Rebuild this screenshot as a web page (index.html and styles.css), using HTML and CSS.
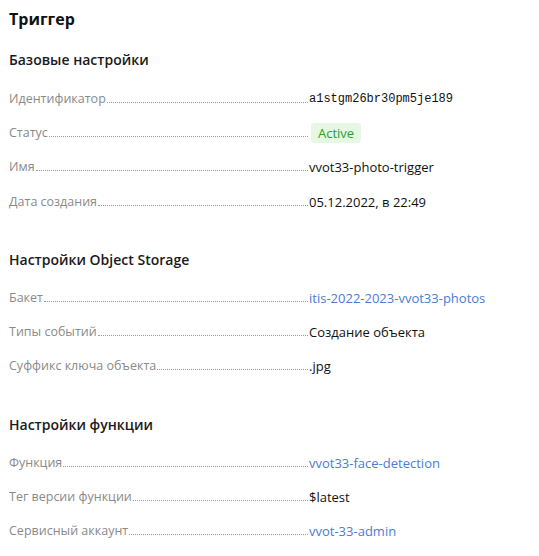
FILE: index.html
```html
<!DOCTYPE html>
<html lang="ru">
<head>
<meta charset="utf-8">
<title>Триггер</title>
<link rel="stylesheet" href="styles.css">
</head>
<body>
<div class="page">
  <h1 class="title">Триггер</h1>

  <section class="section first">
    <h2 class="section-title">Базовые настройки</h2>
    <div class="rows">
      <div class="row"><div class="label"><span class="label-text">Идентификатор</span><span class="dots"></span></div><div class="value mono">a1stgm26br30pm5je189</div></div>
      <div class="row"><div class="label"><span class="label-text">Статус</span><span class="dots"></span></div><div class="value"><span class="badge">Active</span></div></div>
      <div class="row"><div class="label"><span class="label-text">Имя</span><span class="dots"></span></div><div class="value">vvot33-photo-trigger</div></div>
      <div class="row"><div class="label"><span class="label-text">Дата создания</span><span class="dots"></span></div><div class="value">05.12.2022, в 22:49</div></div>
    </div>
  </section>

  <section class="section">
    <h2 class="section-title">Настройки Object Storage</h2>
    <div class="rows">
      <div class="row"><div class="label"><span class="label-text">Бакет</span><span class="dots"></span></div><div class="value"><a class="link" href="#">itis-2022-2023-vvot33-photos</a></div></div>
      <div class="row"><div class="label"><span class="label-text">Типы событий</span><span class="dots"></span></div><div class="value">Создание объекта</div></div>
      <div class="row"><div class="label"><span class="label-text">Суффикс ключа объекта</span><span class="dots"></span></div><div class="value">.jpg</div></div>
    </div>
  </section>

  <section class="section">
    <h2 class="section-title">Настройки функции</h2>
    <div class="rows">
      <div class="row"><div class="label"><span class="label-text">Функция</span><span class="dots"></span></div><div class="value"><a class="link" href="#">vvot33-face-detection</a></div></div>
      <div class="row"><div class="label"><span class="label-text">Тег версии функции</span><span class="dots"></span></div><div class="value">$latest</div></div>
      <div class="row"><div class="label"><span class="label-text">Сервисный аккаунт</span><span class="dots"></span></div><div class="value"><a class="link" href="#">vvot-33-admin</a></div></div>
    </div>
  </section>
</div>
</body>
</html>
```

FILE: styles.css
```css
* { box-sizing: border-box; }
html, body { margin: 0; padding: 0; background: #ffffff; }
body {
  font-family: "Open Sans", "Noto Sans", sans-serif;
  color: #111111;
  font-size: 13px;
}
.page {
  padding: 7px 9px 0 9px;
}
.title {
  margin: 0;
  font-size: 16px;
  line-height: 24px;
  font-weight: 700;
  color: #111;
}
.section { margin-top: 29.5px; }
.section.first { margin-top: 17px; }
.section-title {
  margin: 0 0 8.5px 0;
  font-size: 14px;
  line-height: 24px;
  font-weight: 600;
  color: #1a1a1a;
}
.section.first .section-title { margin-bottom: 9.5px; }
.rows { display: flex; flex-direction: column; }
.row {
  display: grid;
  grid-template-columns: 300px auto;
  height: 34.3px;
  align-items: center;
}
.label {
  display: flex;
  align-items: baseline;
  color: #8a8a8a;
  font-size: 12.5px;
  line-height: 18px;
}
.label-text { white-space: nowrap; }
.dots {
  flex: 1;
  border-bottom: 1px dotted #9a9a9a;
  margin-left: 1px;
  margin-right: 1px;
  height: 1px;
}
.value {
  font-size: 13px;
  line-height: 18px;
  color: #111;
  white-space: nowrap;
}
.mono {
  font-family: "Liberation Mono", "DejaVu Sans Mono", monospace;
  font-size: 12px;
}
.badge {
  display: inline-block;
  margin-left: 2px;
  padding: 1px 7px;
  background: #e6f7e4;
  color: #25a136;
  border-radius: 4px;
  line-height: 18px;
}
.link {
  color: #4c7bd6;
  text-decoration: none;
}
```
